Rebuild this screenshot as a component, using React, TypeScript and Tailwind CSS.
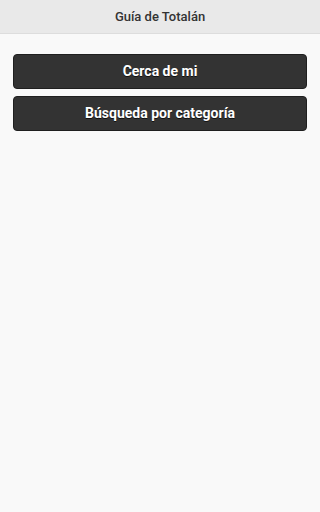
export default function App() {
  return (
    <div className="min-h-[512px] w-full bg-[#f9f9f9] font-['Roboto',sans-serif]">
      {/* Header */}
      <div className="flex h-[34px] items-center justify-center border-b border-[#dddddd] bg-[#e9e9e9]">
        <h1 className="text-[13px] font-medium text-[#333333]">Guía de Totalán</h1>
      </div>

      {/* Menu buttons */}
      <div className="flex flex-col gap-[7px] px-[13px] pt-[20px]">
        <button
          type="button"
          className="h-[35px] w-full rounded-[4px] border border-[#1f1f1f] bg-[#333333] text-[14px] font-bold text-white [text-shadow:0_1px_0_#111]"
        >
          Cerca de mi
        </button>
        <button
          type="button"
          className="h-[35px] w-full rounded-[4px] border border-[#1f1f1f] bg-[#333333] text-[14px] font-bold text-white [text-shadow:0_1px_0_#111]"
        >
          Búsqueda por categoría
        </button>
      </div>
    </div>
  );
}
